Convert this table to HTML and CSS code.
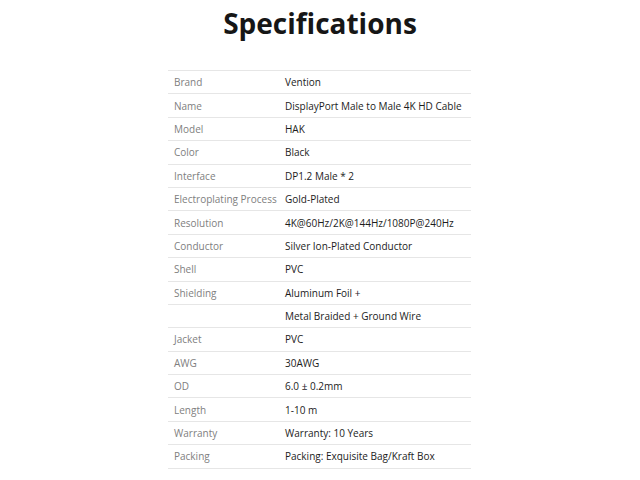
FILE: index.html
```html
<!DOCTYPE html>
<html>
<head>
<meta charset="utf-8">
<link rel="stylesheet" href="styles.css">
</head>
<body>
<div class="page">
  <h1 class="title">Specifications</h1>
  <div class="specs">
    <div class="row"><div class="k">Brand</div><div class="v">Vention</div></div>
    <div class="row"><div class="k">Name</div><div class="v">DisplayPort Male to Male 4K HD Cable</div></div>
    <div class="row"><div class="k">Model</div><div class="v">HAK</div></div>
    <div class="row"><div class="k">Color</div><div class="v">Black</div></div>
    <div class="row"><div class="k">Interface</div><div class="v">DP1.2 Male * 2</div></div>
    <div class="row"><div class="k">Electroplating Process</div><div class="v">Gold-Plated</div></div>
    <div class="row"><div class="k">Resolution</div><div class="v">4K@60Hz/2K@144Hz/1080P@240Hz</div></div>
    <div class="row"><div class="k">Conductor</div><div class="v">Silver Ion-Plated Conductor</div></div>
    <div class="row"><div class="k">Shell</div><div class="v">PVC</div></div>
    <div class="row"><div class="k">Shielding</div><div class="v">Aluminum Foil +</div></div>
    <div class="row"><div class="k"></div><div class="v">Metal Braided + Ground Wire</div></div>
    <div class="row"><div class="k">Jacket</div><div class="v">PVC</div></div>
    <div class="row"><div class="k">AWG</div><div class="v">30AWG</div></div>
    <div class="row"><div class="k">OD</div><div class="v">6.0 ± 0.2mm</div></div>
    <div class="row"><div class="k">Length</div><div class="v">1-10 m</div></div>
    <div class="row"><div class="k">Warranty</div><div class="v">Warranty: 10 Years</div></div>
    <div class="row"><div class="k">Packing</div><div class="v">Packing: Exquisite Bag/Kraft Box</div></div>
  </div>
</div>
</body>
</html>
```

FILE: styles.css
```css
html, body {
  margin: 0;
  padding: 0;
  background: #ffffff;
}
.page {
  width: 640px;
  height: 480px;
  font-family: "Open Sans", "Liberation Sans", sans-serif;
}
.title {
  margin: 0;
  height: 70px;
  padding-top: 4px;
  box-sizing: border-box;
  text-align: center;
  font-size: 28px;
  line-height: 38px;
  font-weight: 700;
  color: #161616;
}
.specs {
  margin-left: 168px;
  width: 303px;
  border-top: 1px solid #e6e6e6;
}
.row {
  display: flex;
  align-items: center;
  height: 23.4px;
  box-sizing: border-box;
  border-bottom: 1px solid #e6e6e6;
  font-size: 10px;
}
.k {
  width: 117px;
  padding-left: 6px;
  box-sizing: border-box;
  color: #808080;
  white-space: nowrap;
}
.v {
  color: #1c1c1c;
  font-weight: 500;
  white-space: nowrap;
}
```
